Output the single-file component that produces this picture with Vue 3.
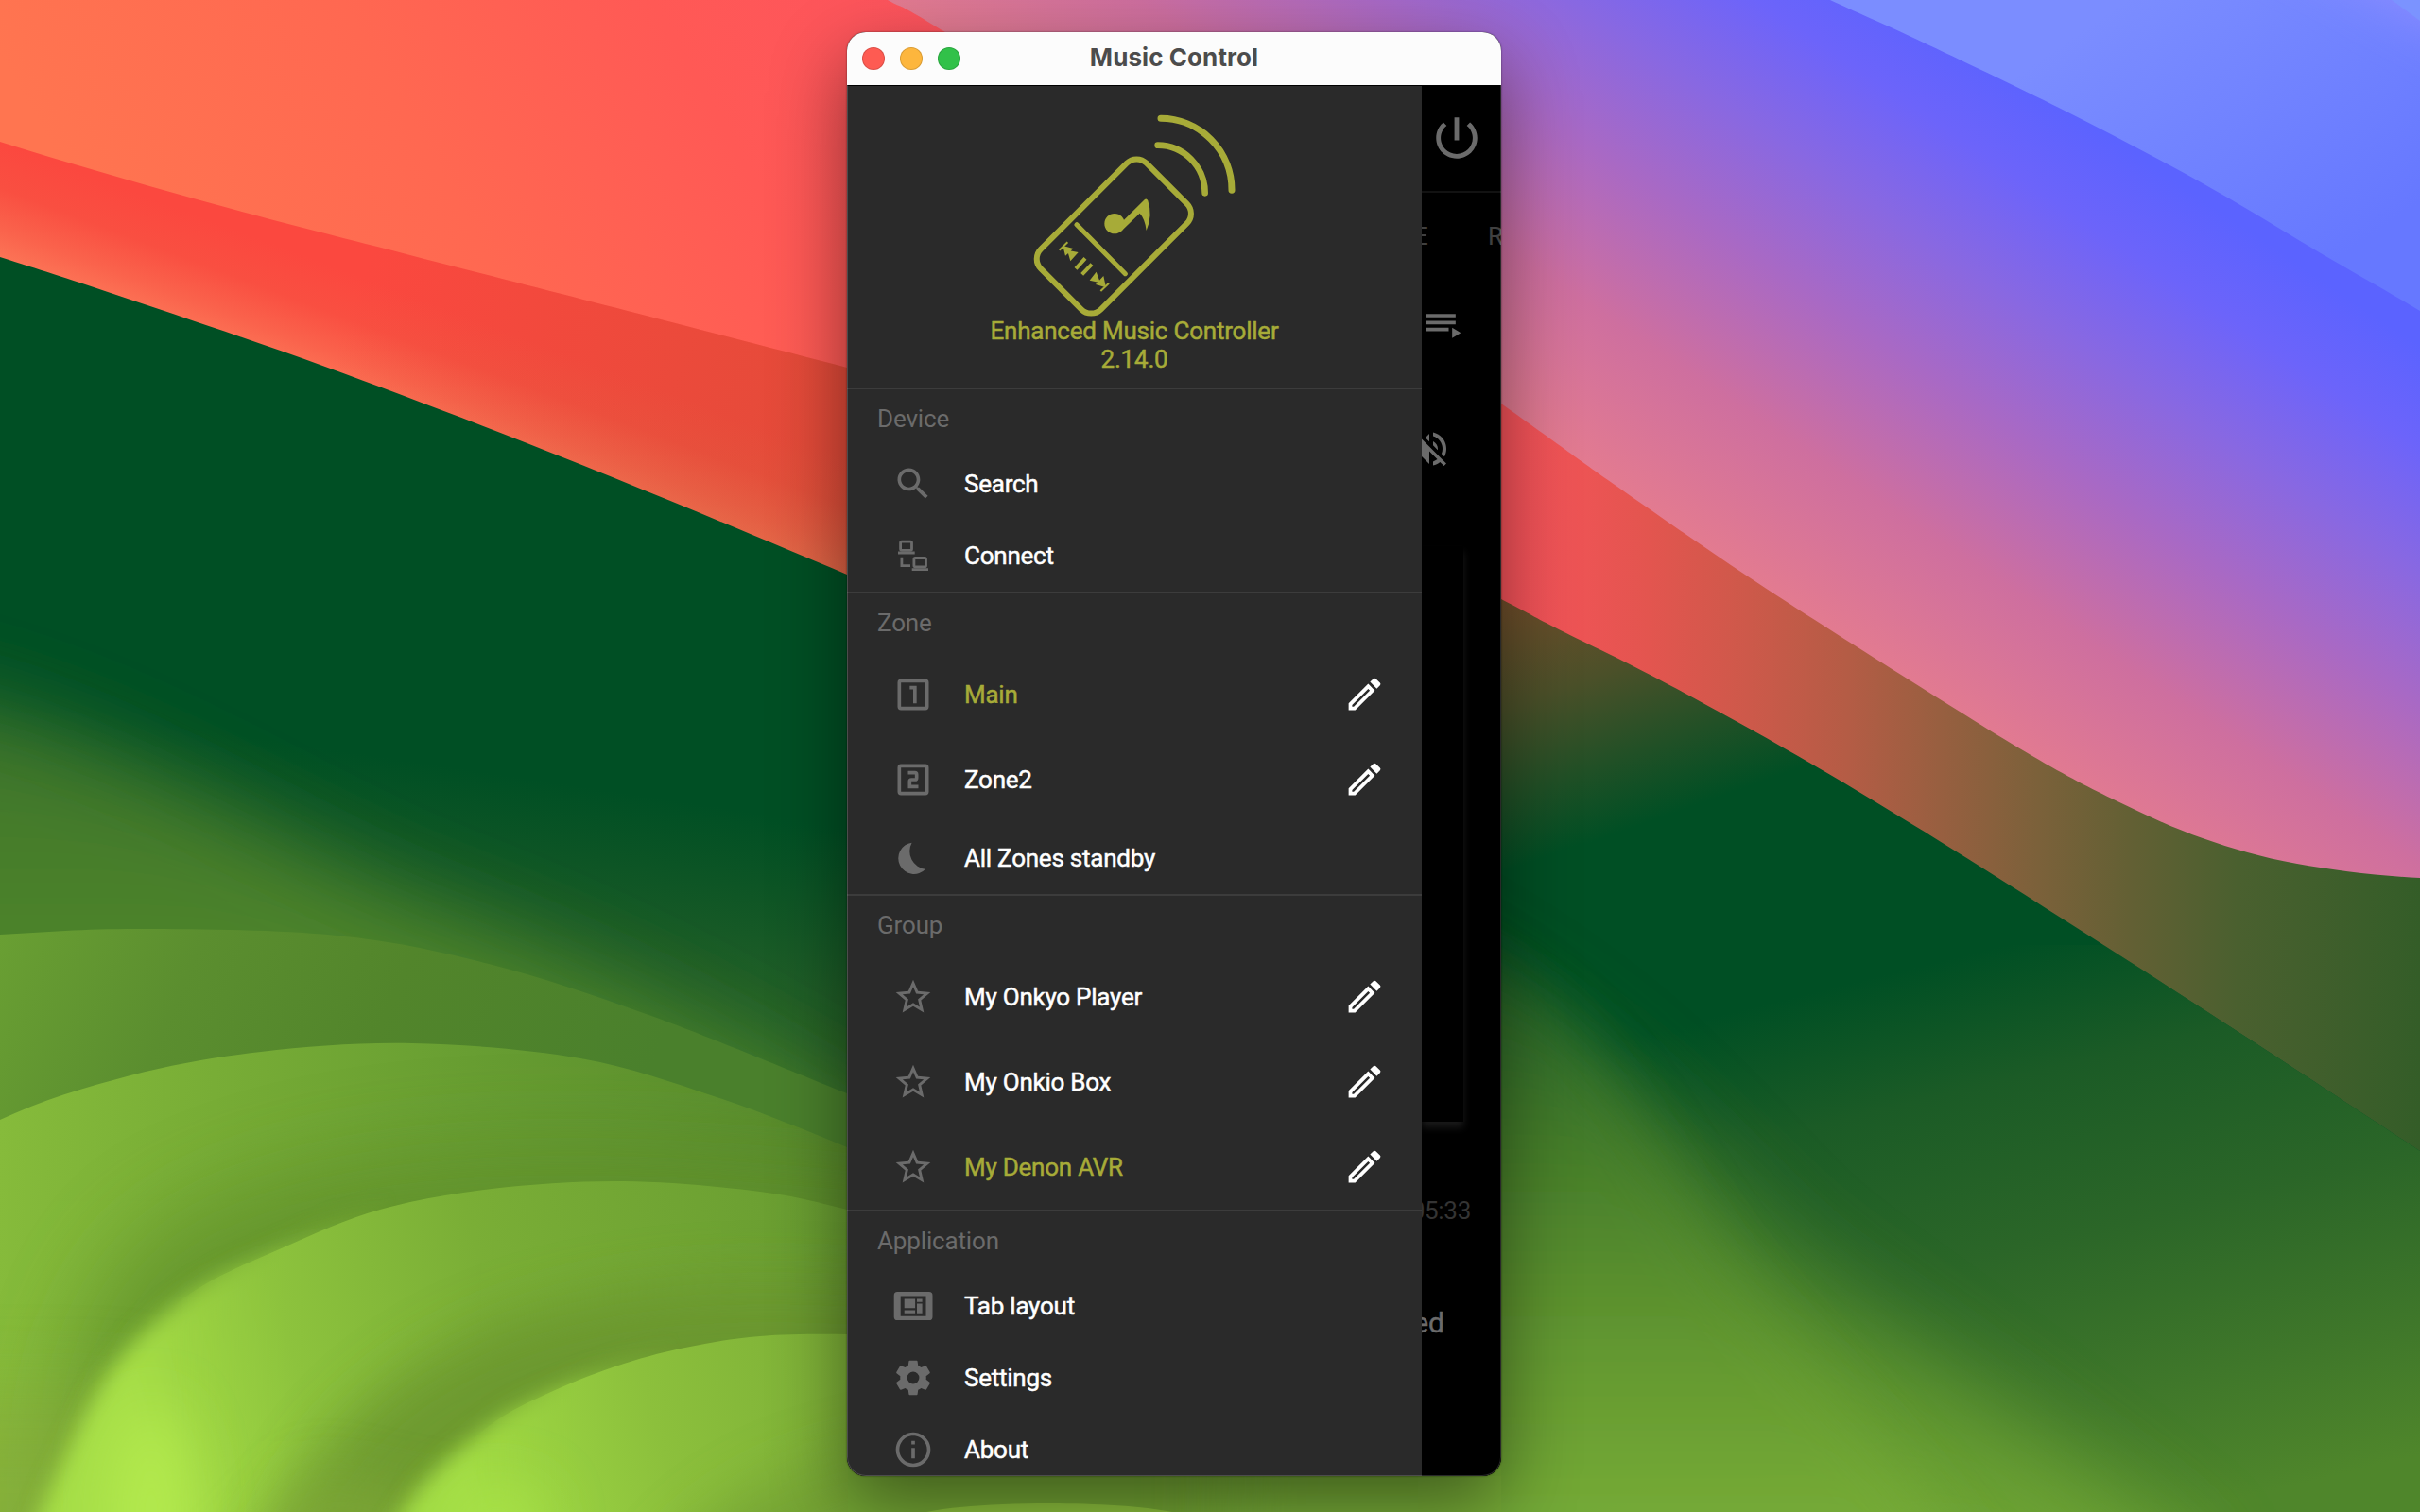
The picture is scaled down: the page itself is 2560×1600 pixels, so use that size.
<script setup>
const icons = {
  search: 'M15.5 14h-.79l-.28-.27C15.41 12.59 16 11.11 16 9.5 16 5.91 13.09 3 9.5 3S3 5.91 3 9.5 5.91 16 9.5 16c1.61 0 3.09-.59 4.23-1.57l.27.28v.79l5 4.99L20.49 19l-4.99-5zm-6 0C7.01 14 5 11.99 5 9.5S7.01 5 9.5 5 14 7.01 14 9.5 11.99 14 9.5 14z',
  one: 'M19 3H5a2 2 0 0 0-2 2v14a2 2 0 0 0 2 2h14a2 2 0 0 0 2-2V5a2 2 0 0 0-2-2zm0 16H5V5h14v14zM12 17h2V7h-4v2h2v8z',
  two: 'M19 3H5a2 2 0 0 0-2 2v14a2 2 0 0 0 2 2h14a2 2 0 0 0 2-2V5a2 2 0 0 0-2-2zm0 16H5V5h14v14zM15 15h-4v-2h2a2 2 0 0 0 2-2V9a2 2 0 0 0-2-2H9v2h4v2h-2a2 2 0 0 0-2 2v4h6v-2z',
  star: 'M22 9.24l-7.19-.62L12 2 9.19 8.63 2 9.24l5.46 4.73L5.82 21 12 17.27 18.18 21l-1.63-7.03L22 9.24zM12 15.4l-3.76 2.27 1-4.28-3.32-2.88 4.38-.38L12 6.1l1.71 4.04 4.38.38-3.32 2.88 1 4.28L12 15.4z',
  gear: 'M12,15.5A3.5,3.5 0 0,1 8.5,12A3.5,3.5 0 0,1 12,8.5A3.5,3.5 0 0,1 15.5,12A3.5,3.5 0 0,1 12,15.5M19.43,12.97C19.47,12.65 19.5,12.33 19.5,12C19.5,11.67 19.47,11.34 19.43,11L21.54,9.37C21.73,9.22 21.78,8.95 21.66,8.73L19.66,5.27C19.54,5.05 19.27,4.96 19.05,5.05L16.56,6.05C16.04,5.66 15.5,5.32 14.87,5.07L14.5,2.42C14.46,2.18 14.25,2 14,2H10C9.75,2 9.54,2.18 9.5,2.42L9.13,5.07C8.5,5.32 7.96,5.66 7.44,6.05L4.95,5.05C4.73,4.96 4.46,5.05 4.34,5.27L2.34,8.73C2.21,8.95 2.27,9.22 2.46,9.37L4.57,11C4.53,11.34 4.5,11.67 4.5,12C4.5,12.33 4.53,12.65 4.57,12.97L2.46,14.63C2.27,14.78 2.21,15.05 2.34,15.27L4.34,18.73C4.46,18.95 4.73,19.03 4.95,18.95L7.44,17.94C7.96,18.34 8.5,18.68 9.13,18.93L9.5,21.58C9.54,21.82 9.75,22 10,22H14C14.25,22 14.46,21.82 14.5,21.58L14.87,18.93C15.5,18.67 16.04,18.34 16.56,17.94L19.05,18.95C19.27,19.03 19.54,18.95 19.66,18.73L21.66,15.27C21.78,15.05 21.73,14.78 21.54,14.63L19.43,12.97Z',
  info: 'M11 7h2v2h-2zm0 4h2v6h-2zm1-9C6.48 2 2 6.48 2 12s4.48 10 10 10 10-4.48 10-10S17.52 2 12 2zm0 18c-4.41 0-8-3.59-8-8s3.59-8 8-8 8 3.59 8 8-3.59 8-8 8z',
  pencil: 'M14.06,9L15,9.94L5.92,19H5V18.08L14.06,9M17.66,3C17.41,3 17.15,3.1 16.96,3.29L15.13,5.12L18.88,8.87L20.71,7.04C21.1,6.65 21.1,6 20.71,5.63L18.37,3.29C18.17,3.09 17.92,3 17.66,3M14.06,6.19L3,17.25V21H6.75L17.81,9.94L14.06,6.19Z',
}

const sections = [
  { title: 'Device', items: [
    { icon: 'search', label: 'Search' },
    { icon: 'connect', label: 'Connect' },
  ] },
  { title: 'Zone', items: [
    { icon: 'one', label: 'Main', editable: true, active: true },
    { icon: 'two', label: 'Zone2', editable: true },
    { icon: 'moon', label: 'All Zones standby' },
  ] },
  { title: 'Group', items: [
    { icon: 'star', label: 'My Onkyo Player', editable: true },
    { icon: 'star', label: 'My Onkio Box', editable: true },
    { icon: 'star', label: 'My Denon AVR', editable: true, active: true },
  ] },
  { title: 'Application', items: [
    { icon: 'tablet', label: 'Tab layout' },
    { icon: 'gear', label: 'Settings' },
    { icon: 'info', label: 'About' },
  ] },
]

// Smooth curve through the given points (Catmull-Rom as cubic Béziers), closed by a tail.
function ridge(points, tail) {
  const p = (i) => points[Math.max(0, Math.min(points.length - 1, i))]
  let d = `M${points[0].join(' ')}`
  for (let i = 0; i < points.length - 1; i++) {
    const [a, b, c, e] = [p(i - 1), p(i), p(i + 1), p(i + 2)]
    d += `C${b[0] + (c[0] - a[0]) / 6} ${b[1] + (c[1] - a[1]) / 6} ${c[0] - (e[0] - b[0]) / 6} ${c[1] - (e[1] - b[1]) / 6} ${c[0]} ${c[1]}`
  }
  return d + tail + 'Z'
}

const shapes = {
  band: ridge([[-200, 84], [0, 150], [212, 212], [430, 269], [695, 337], [896, 389], [1000, 416]], 'V800H-200'),
  violet: ridge([[880, -34], [939, 0], [1000, 34], [1300, 222], [1588, 427], [1711, 515], [1849, 610], [2011, 714], [2150, 800], [2240, 848], [2330, 887], [2430, 914], [2560, 929], [2700, 928]], 'V-40H880'),
  sky: ridge([[1850, -42], [1936, 0], [2024, 40], [2180, 115], [2330, 194], [2455, 268], [2560, 329], [2660, 392]], 'V-42'),
  forestLeft: ridge([[-140, 228], [0, 272], [123, 312], [344, 388], [603, 487], [896, 608], [1100, 698]], 'V1640H-140'),
  forestRight: ridge([[1450, 565], [1588, 634], [1645, 664], [1755, 719], [1902, 800], [2042, 884], [2205, 987], [2374, 1096], [2560, 1218], [2700, 1310]], 'V1640H1050V800'),
  r1: ridge([[-150, 1000], [0, 989], [149, 983], [356, 990], [517, 1020], [689, 1075], [896, 1157], [1000, 1200]], 'V1640H-150'),
  r2: ridge([[-120, 1260], [0, 1185], [138, 1138], [276, 1113], [436, 1104], [614, 1120], [758, 1161], [896, 1214], [1000, 1260]], 'V1640H-120'),
  r3: ridge([[10, 1680], [60, 1560], [120, 1445], [201, 1369], [300, 1320], [402, 1280], [520, 1258], [660, 1250], [804, 1261], [896, 1280], [1000, 1310]], 'V1680'),
  r4: ridge([[380, 1680], [440, 1580], [517, 1509], [585, 1472], [660, 1443], [730, 1425], [804, 1414], [896, 1412], [1000, 1416]], 'V1680'),
}
</script>

<template>
  <div class="desktop">
    <svg class="wallpaper" viewBox="0 0 2560 1600" width="2560" height="1600" aria-hidden="true">
      <defs>
        <linearGradient id="coral" gradientUnits="userSpaceOnUse" x1="0" y1="60" x2="830" y2="-410">
          <stop offset="0" stop-color="#ff7550" /><stop offset=".36" stop-color="#ff6851" />
          <stop offset=".66" stop-color="#ff5955" /><stop offset="1" stop-color="#fd5260" />
        </linearGradient>
        <linearGradient id="redband" gradientUnits="userSpaceOnUse" x1="0" y1="149" x2="-41" y2="258">
          <stop offset="0" stop-color="#fb483f" /><stop offset=".4" stop-color="#f94f41" />
          <stop offset=".75" stop-color="#fa634c" /><stop offset="1" stop-color="#fc7456" />
        </linearGradient>
        <linearGradient id="banddark" gradientUnits="userSpaceOnUse" x1="380" y1="300" x2="930" y2="500">
          <stop offset="0" stop-color="#b8502e" stop-opacity="0" /><stop offset="1" stop-color="#b8502e" stop-opacity=".4" />
        </linearGradient>
        <linearGradient id="redright" gradientUnits="userSpaceOnUse" x1="1600" y1="0" x2="2560" y2="0">
          <stop offset="0" stop-color="#f7535a" /><stop offset=".15" stop-color="#e3554f" />
          <stop offset=".26" stop-color="#cd594a" />
          <stop offset=".37" stop-color="#b45c45" /><stop offset=".47" stop-color="#985f40" />
          <stop offset=".58" stop-color="#7b613a" /><stop offset=".68" stop-color="#636034" />
          <stop offset=".8" stop-color="#4a602f" /><stop offset="1" stop-color="#345d28" />
        </linearGradient>
        <linearGradient id="violet" gradientUnits="userSpaceOnUse" x1="2180" y1="109" x2="1844" y2="607">
          <stop offset="0" stop-color="#5b63ff" /><stop offset=".15" stop-color="#6c64fa" />
          <stop offset=".33" stop-color="#8868e2" /><stop offset=".53" stop-color="#a969c4" />
          <stop offset=".76" stop-color="#ce6f9f" /><stop offset="1" stop-color="#e37b90" />
        </linearGradient>
        <linearGradient id="sky" gradientUnits="userSpaceOnUse" x1="2250" y1="0" x2="2450" y2="290">
          <stop offset="0" stop-color="#7b8dff" /><stop offset="1" stop-color="#6678ff" />
        </linearGradient>
        <linearGradient id="midgreen" gradientUnits="userSpaceOnUse" x1="0" y1="740" x2="-60" y2="1140">
          <stop offset="0" stop-color="#1e5c26" stop-opacity="0" /><stop offset=".45" stop-color="#205e27" />
          <stop offset="1" stop-color="#3f762b" />
        </linearGradient>
        <linearGradient id="hill" gradientUnits="userSpaceOnUse" x1="0" y1="760" x2="0" y2="1000">
          <stop offset="0" stop-color="#3d732a" /><stop offset="1" stop-color="#4d842c" />
        </linearGradient>
        <linearGradient id="r1" gradientUnits="userSpaceOnUse" x1="0" y1="960" x2="640" y2="1240">
          <stop offset="0" stop-color="#6aa033" /><stop offset=".3" stop-color="#5b8e2f" />
          <stop offset=".6" stop-color="#52852b" /><stop offset="1" stop-color="#4a802c" />
        </linearGradient>
        <linearGradient id="r2" gradientUnits="userSpaceOnUse" x1="0" y1="1180" x2="900" y2="1200">
          <stop offset="0" stop-color="#86bb3b" /><stop offset=".25" stop-color="#78ad36" />
          <stop offset=".55" stop-color="#689e32" /><stop offset="1" stop-color="#55882c" />
        </linearGradient>
        <linearGradient id="r3" gradientUnits="userSpaceOnUse" x1="150" y1="1500" x2="900" y2="1290">
          <stop offset="0" stop-color="#a6de46" /><stop offset=".22" stop-color="#8dc33d" />
          <stop offset=".5" stop-color="#7aae36" /><stop offset="1" stop-color="#689c31" />
        </linearGradient>
        <linearGradient id="r4" gradientUnits="userSpaceOnUse" x1="500" y1="1590" x2="1000" y2="1440">
          <stop offset="0" stop-color="#a2dc44" /><stop offset=".4" stop-color="#8cc03c" />
          <stop offset="1" stop-color="#76a835" />
        </linearGradient>
        <linearGradient id="rightdown" gradientUnits="userSpaceOnUse" x1="1960" y1="1040" x2="2110" y2="1650">
          <stop offset="0" stop-color="#1b5b26" stop-opacity="0" /><stop offset=".22" stop-color="#1b5b26" />
          <stop offset=".5" stop-color="#2b6628" /><stop offset=".78" stop-color="#3f772a" /><stop offset="1" stop-color="#4f862b" />
        </linearGradient>
        <linearGradient id="meadow" gradientUnits="userSpaceOnUse" x1="0" y1="1010" x2="0" y2="1600">
          <stop offset="0" stop-color="#2a6427" /><stop offset=".4" stop-color="#4c832c" />
          <stop offset=".7" stop-color="#659a30" /><stop offset="1" stop-color="#78ad37" />
        </linearGradient>
        <linearGradient id="brown" gradientUnits="userSpaceOnUse" x1="1588" y1="610" x2="1688" y2="890">
          <stop offset="0" stop-color="#7a4e2b" /><stop offset=".45" stop-color="#4b5029" />
          <stop offset=".75" stop-color="#215026" /><stop offset="1" stop-color="#004f24" />
        </linearGradient>
        <linearGradient id="fade3" gradientUnits="userSpaceOnUse" x1="180" y1="1400" x2="300" y2="1400">
          <stop offset="0" stop-color="#000" /><stop offset="1" stop-color="#fff" />
        </linearGradient>
        <linearGradient id="fade4" gradientUnits="userSpaceOnUse" x1="500" y1="1500" x2="610" y2="1500">
          <stop offset="0" stop-color="#000" /><stop offset="1" stop-color="#fff" />
        </linearGradient>
        <linearGradient id="out3" gradientUnits="userSpaceOnUse" x1="290" y1="1400" x2="420" y2="1400">
          <stop offset="0" stop-color="#fff" /><stop offset="1" stop-color="#000" />
        </linearGradient>
        <linearGradient id="out4" gradientUnits="userSpaceOnUse" x1="600" y1="1500" x2="720" y2="1500">
          <stop offset="0" stop-color="#fff" /><stop offset="1" stop-color="#000" />
        </linearGradient>
        <filter id="b11" filterUnits="userSpaceOnUse" x="-300" y="-300" width="3160" height="2200"><feGaussianBlur stdDeviation="11" /></filter>
        <filter id="b30" filterUnits="userSpaceOnUse" x="-300" y="-300" width="3160" height="2200"><feGaussianBlur stdDeviation="30" /></filter>
        <filter id="b45" filterUnits="userSpaceOnUse" x="-300" y="-300" width="3160" height="2300"><feGaussianBlur stdDeviation="45" /></filter>
        <mask id="m3" maskUnits="userSpaceOnUse" x="0" y="1200" width="1100" height="400"><rect y="1200" width="1100" height="400" fill="url(#fade3)" /></mask>
        <mask id="m4" maskUnits="userSpaceOnUse" x="0" y="1300" width="1100" height="300"><rect y="1300" width="1100" height="300" fill="url(#fade4)" /></mask>
        <mask id="s3" maskUnits="userSpaceOnUse" x="0" y="1200" width="1100" height="400"><rect y="1200" width="1100" height="400" fill="url(#out3)" /></mask>
        <mask id="s4" maskUnits="userSpaceOnUse" x="0" y="1300" width="1100" height="300"><rect y="1300" width="1100" height="300" fill="url(#out4)" /></mask>
        <clipPath id="cR2"><path :d="shapes.r2" /></clipPath>
        <clipPath id="cR3"><path :d="shapes.r3" /></clipPath>
        <clipPath id="cR4"><path :d="shapes.r4" /></clipPath>
        <clipPath id="cRight"><path :d="shapes.forestRight" /></clipPath>
      </defs>

      <rect width="2560" height="1600" fill="url(#coral)" />
      <path :d="shapes.band" fill="url(#redband)" />
      <path :d="shapes.band" fill="url(#banddark)" />
      <rect x="1300" y="300" width="1260" height="950" fill="url(#redright)" />

      <path :d="shapes.violet" fill="url(#violet)" />
      <path :d="shapes.sky" fill="url(#sky)" />
      <path d="M2380 -80L2640 -80V60Z" fill="#a294ff" opacity=".6" filter="url(#b30)" />
      <path d="M2530 0L2560 22V0Z" fill="#7b93ff" />

      <!-- left forest and soft hill glow -->
      <path :d="shapes.forestLeft" fill="#004f24" />
      <rect x="0" y="740" width="1100" height="860" fill="url(#midgreen)" />
      <path d="M-200 715C60 735 220 860 430 955C600 1020 760 1090 1000 1250V1700H-200Z" fill="url(#hill)" filter="url(#b45)" />

      <path :d="shapes.r1" fill="url(#r1)" />

      <g clip-path="url(#cR2)">
        <rect y="1080" width="1000" height="520" fill="url(#r2)" />
        <path d="M70 1700C60 1500 70 1380 170 1300C320 1210 560 1190 1000 1240V1700Z" fill="#608f2c" opacity=".72" filter="url(#b45)" />
        <rect x="-160" y="1480" width="330" height="300" fill="#86aa3a" opacity=".6" filter="url(#b45)" />
      </g>

      <!-- the left flanks are soft, the crests stay crisp -->
      <g mask="url(#s3)"><path :d="shapes.r3" fill="url(#r3)" filter="url(#b11)" /></g>
      <g mask="url(#m3)"><rect y="1230" width="1100" height="400" fill="url(#r3)" clip-path="url(#cR3)" /></g>
      <g clip-path="url(#cR3)">
        <path d="M270 1720C280 1560 400 1440 560 1390C700 1350 820 1350 1040 1370V1720Z" fill="#6a952e" opacity=".85" filter="url(#b30)" />
        <path d="M200 1700L330 1560L520 1600V1700Z" fill="#82aa37" opacity=".6" filter="url(#b30)" />
      </g>
      <ellipse cx="160" cy="1600" rx="40" ry="110" fill="#b4ea4d" filter="url(#b30)" />

      <g mask="url(#s4)"><path :d="shapes.r4" fill="url(#r4)" filter="url(#b11)" /></g>
      <g mask="url(#m4)"><rect x="300" y="1380" width="800" height="300" fill="url(#r4)" clip-path="url(#cR4)" /></g>
      <g clip-path="url(#cR4)">
        <path d="M660 1740C700 1620 800 1540 1020 1520V1740Z" fill="#6f9c30" opacity=".7" filter="url(#b30)" />
      </g>
      <ellipse cx="525" cy="1610" rx="50" ry="36" fill="#a8e247" filter="url(#b30)" />

      <rect x="897" y="1412" width="700" height="188" fill="#74a634" />
      <path d="M980 1600C1040 1588 1180 1588 1240 1600Z" fill="#8fc43e" />

      <!-- right forest and meadow -->
      <g clip-path="url(#cRight)">
        <rect x="1588" y="560" width="1000" height="1060" fill="url(#brown)" />
        <rect x="1588" y="1000" width="972" height="600" fill="url(#rightdown)" />
        <path d="M1300 870L1588 1045C1730 1140 1790 1215 1890 1320C2000 1410 2120 1480 2330 1650V1800H1300Z" fill="url(#meadow)" filter="url(#b45)" opacity=".75" />
        <path d="M1300 860L1588 1030C1690 1100 1730 1190 1800 1300C1870 1410 1980 1490 2100 1670V1800H1300Z" fill="url(#meadow)" filter="url(#b30)" opacity=".8" />
      </g>
      <rect x="1500" y="1562" width="88" height="38" fill="#76aa36" />
    </svg>

    <main class="window">
      <header class="titlebar">
        <div class="lights"><i class="red"></i><i class="yellow"></i><i class="green"></i></div>
        <h1>Music Control</h1>
      </header>

      <div class="content">
        <nav class="drawer">
          <div class="brand">
            <svg class="logo" viewBox="0 0 780 750" fill="none" stroke="#a7ab38" stroke-linecap="round">
              <rect x="88" y="315" width="474" height="270" rx="44" stroke-width="18" transform="rotate(-45 325 450)" />
              <path d="M207 413L361 569" stroke-width="15" />
              <path d="M464 161A150 152 0 0 1 614 313" stroke-width="20" />
              <path d="M474 76A225 227 0 0 1 699 304" stroke-width="21" />
              <g fill="#a7ab38" stroke="none">
                <circle cx="327" cy="410" r="32" />
                <path d="M357 398L423 333Q429 329 433 337Q449 385 428 432Q424 395 407 377L348 434Z" />
                <path d="M163 480L196 489L171 512ZM177 494L212 501L187 529Z" />
                <path d="M269 563L248 590L282 598ZM292 576L267 603L300 613Z" />
              </g>
              <g stroke-linecap="butt">
                <path d="M152 494L178 469M283 624L309 599" stroke-width="6" />
                <path d="M234 520L204 553M255 539L224 571" stroke-width="12" />
              </g>
            </svg>
            <strong>Enhanced Music Controller</strong>
            <strong>2.14.0</strong>
          </div>

          <section v-for="s in sections" :key="s.title">
            <h2>{{ s.title }}</h2>
            <div v-for="it in s.items" :key="it.label" class="row" :class="{ tall: it.editable, active: it.active }">
              <svg v-if="it.icon === 'connect'" class="icon" viewBox="0 0 44 44" fill="none" stroke="currentColor" stroke-width="2.8">
                <rect x="8.6" y="7.2" width="11.9" height="9.2" rx="1.4" />
                <rect x="22.9" y="24.5" width="12.6" height="9.4" rx="1.4" />
                <path d="M6 19H23.7M20.7 36.7H38M9.9 23.7V32.7H19" />
              </svg>
              <svg v-else-if="it.icon === 'moon'" class="icon" viewBox="0 0 44 44">
                <path fill="currentColor" d="M20.6 5.7A16.7 16.7 0 1 0 35 33.8A19.1 19.1 0 0 1 20.6 5.7Z" />
              </svg>
              <svg v-else-if="it.icon === 'tablet'" class="icon" viewBox="0 0 44 44" fill="currentColor">
                <path fill-rule="evenodd" d="M5.3 7.1H38.9A3.6 3.6 0 0 1 42.5 10.7V33.4A3.6 3.6 0 0 1 38.9 37H5.3A3.6 3.6 0 0 1 1.7 33.4V10.7A3.6 3.6 0 0 1 5.3 7.1ZM8.7 11.4V32.8H35.5V11.4Z" />
                <path d="M12.7 14.5H24.1V24.3H12.7ZM12.7 26.4H24.1V29.8H12.7ZM26 14.5H31.6V17.8H26ZM26 19.6H31.6V29.8H26Z" />
              </svg>
              <svg v-else class="icon" viewBox="0 0 24 24"><path fill="currentColor" :d="icons[it.icon]" /></svg>
              <span>{{ it.label }}</span>
              <svg v-if="it.editable" class="edit" viewBox="0 0 24 24"><path :d="icons.pencil" /></svg>
            </div>
          </section>
        </nav>

        <aside class="behind">
          <div class="appbar">
            <svg viewBox="0 0 24 24" width="58" height="58" fill="#6b6b6b">
              <path d="M13 3h-2v10h2V3zm4.83 2.17l-1.42 1.42C17.99 7.86 19 9.81 19 12c0 3.87-3.13 7-7 7s-7-3.13-7-7c0-2.19 1.01-4.14 2.58-5.42L6.17 5.17C4.23 6.82 3 9.26 3 12c0 4.97 4.03 9 9 9s9-4.03 9-9c0-2.74-1.23-5.18-3.17-6.83z" />
            </svg>
          </div>
          <div class="tabs"><span>E</span><span>R</span></div>
          <svg class="queue" viewBox="0 0 24 24" fill="#6b6b6b">
            <path d="M19,9H2V11H19V9M19,5H2V7H19V5M2,15H15V13H2V15M17,13V19L22,16L17,13Z" />
          </svg>
          <svg class="mute" viewBox="0 0 24 24" fill="#6b6b6b">
            <path d="M12,4L9.91,6.09L12,8.18M4.27,3L3,4.27L7.73,9H3V15H7L12,20V13.27L16.25,17.53C15.58,18.04 14.83,18.46 14,18.7V20.77C15.38,20.45 16.63,19.82 17.68,18.96L19.73,21L21,19.73L12,10.73M19,12C19,12.94 18.8,13.82 18.46,14.64L19.97,16.15C20.62,14.91 21,13.5 21,12C21,7.72 18,4.14 14,3.23V5.29C16.89,6.15 19,8.83 19,12M16.5,12C16.5,10.23 15.5,8.71 14,7.97V10.18L16.45,12.63C16.5,12.43 16.5,12.21 16.5,12Z" />
          </svg>
          <div class="cover"></div>
          <div class="time">05:33</div>
          <div class="status">ed</div>
        </aside>
      </div>
    </main>
  </div>
</template>

<style>
html, body { margin: 0; background: #004f24; }
</style>

<style scoped>
.desktop { position: relative; width: 2560px; height: 1600px; overflow: hidden; font-family: Roboto, sans-serif; }
.wallpaper { display: block; }
.window {
  position: absolute; left: 896px; top: 34px; width: 692px; height: 1528px;
  display: flex; flex-direction: column; border-radius: 20px; overflow: hidden; background: #000;
  box-shadow: 0 0 2px rgba(0, 0, 0, .6), 0 30px 80px rgba(0, 0, 0, .46);
}
.window::after {
  content: ""; position: absolute; inset: 0; border-radius: 20px; pointer-events: none;
  box-shadow: inset 0 0 0 1px rgba(255, 255, 255, .16);
}
.titlebar {
  flex: none; display: grid; grid-template-columns: 120px 1fr 120px; align-items: center;
  height: 57px; box-sizing: border-box; background: #fcfcfc; border-bottom: 1px solid #000;
}
.lights { display: flex; gap: 16px; padding-left: 16px; }
.lights i { width: 24px; height: 24px; border-radius: 50%; box-shadow: inset 0 0 0 1px rgba(0, 0, 0, .14); }
.red { background: #fe5b52; }
.yellow { background: #fdb63d; }
.green { background: #31c149; }
h1 { margin: 0; text-align: center; font: 700 26px/54px Inter, sans-serif; letter-spacing: .08px; color: #4c4c4c; white-space: nowrap; padding-bottom: 2px; }
.content { flex: 1; display: flex; min-height: 0; }
.drawer { flex: none; width: 608px; background: #2a2a2a; overflow: hidden; }
.brand { display: flex; flex-direction: column; align-items: center; height: 320px; }
.logo { flex: none; width: 260px; height: 250px; margin-top: 9px; margin-bottom: -15px; }
.brand strong { font-weight: 400; font-size: 26px; letter-spacing: -.22px; line-height: 30px; color: #a7ab38; -webkit-text-stroke: .5px; }
section { border-top: 2px solid #3c3c3c; }
section:first-of-type { border-top-width: 1px; }
h2 { margin: 0; height: 62px; padding-left: 32px; font-weight: 400; font-size: 26px; letter-spacing: -.15px; line-height: 62px; color: #6b6b6b; }
.row { display: flex; align-items: center; height: 76px; padding: 0 38px 0 48px; color: #fff; font-weight: 400; font-size: 26px; letter-spacing: -.24px; }
.row.tall { height: 90px; }
.row.active { color: #a7ab38; }
.row span { flex: 1; margin-left: 32px; white-space: nowrap; -webkit-text-stroke: .5px; }
.icon { width: 44px; height: 44px; color: #6b6b6b; }
.edit { width: 45px; height: 45px; margin-bottom: 1px; fill: #fff; }
.behind { flex: 1; min-width: 0; overflow: hidden; display: flex; flex-direction: column; background: #000; }
.appbar { flex: none; height: 109px; padding-bottom: 2px; border-bottom: 2px solid #121212; display: flex; align-items: center; padding-left: 8px; }
.tabs { flex: none; display: flex; justify-content: space-between; height: 92px; line-height: 92px; font-size: 26px; color: #404040; margin-left: -8px; }
.tabs span:last-child { width: 14px; }
.queue { flex: none; width: 44px; height: 44px; margin: 27px 0 0 1px; }
.mute { flex: none; width: 48px; height: 48px; margin: 84px 0 0 -16px; }
.cover { flex: none; width: 44px; height: 609px; margin-top: 79px; box-shadow: 0 6px 8px rgba(255, 255, 255, .1); background: #000; }
.time { margin-top: 78px; width: 52px; display: flex; justify-content: flex-end; font-size: 26px; letter-spacing: -.3px; line-height: 32px; color: #343434; }
.status { margin-top: 83px; width: 24px; display: flex; justify-content: flex-end; font-size: 30px; line-height: 40px; color: #6b6b6b; -webkit-text-stroke: .4px; }
</style>
